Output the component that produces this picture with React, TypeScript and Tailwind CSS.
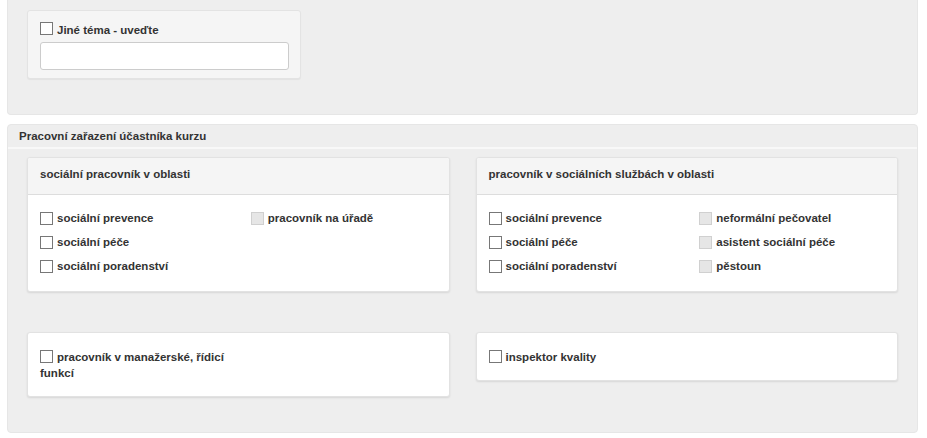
import React from "react";

const font = { fontFamily: '"Liberation Sans", Arial, sans-serif' };

function Box({ disabled }: { disabled?: boolean }) {
  return (
    <span
      className={
        "inline-block w-[13px] h-[13px] shrink-0 border " +
        (disabled ? "bg-[#e6e6e6] border-[#d0d0d0]" : "bg-white border-[#777]")
      }
    />
  );
}

function Item({ label, disabled }: { label: string; disabled?: boolean }) {
  return (
    <div className="flex items-center h-6 gap-[4px]">
      <Box disabled={disabled} />
      <span className="translate-y-[1px]">{label}</span>
    </div>
  );
}

function GroupCard({ title, left, right }: { title: string; left: string[]; right: string[] }) {
  return (
    <div className="bg-white rounded-[3px] border border-[#e2e2e2] shadow-[0_1px_2px_rgba(0,0,0,0.1)] overflow-hidden">
      <div className="h-[37px] bg-[#f5f5f5] border-b border-[#dddddd] flex items-center px-3">
        <span className="-translate-y-[1px]">{title}</span>
      </div>
      <div className="grid grid-cols-2 gap-x-[25px] px-3 pt-[11px] pb-[13px]">
        <div>
          {left.map((l) => (
            <Item key={l} label={l} />
          ))}
        </div>
        <div>
          {right.map((l) => (
            <Item key={l} label={l} disabled />
          ))}
        </div>
      </div>
    </div>
  );
}

function SingleLabel({ text }: { text: string }) {
  return (
    <div className="w-1/2 leading-[16px]">
      <span className="inline-flex h-[13px] leading-none align-[-2px] mr-[4px]">
        <Box />
      </span>
      {text}
    </div>
  );
}

export default function App() {
  return (
    <div className="bg-white w-[927px] h-[438px] px-[7px] pr-[9px] text-[11.5px] font-bold text-[#333]" style={font}>
      <div className="bg-[#eeeeee] h-[115px] rounded-b-[4px] border-x border-b border-[#e6e6e6] pt-[10px] px-[19px]">
        <div className="w-[274px] bg-[#f5f5f5] border border-[#e3e3e3] rounded-[3px] shadow-[0_1px_1px_rgba(0,0,0,0.05)] px-3 pt-[10px] pb-[8px]">
          <div className="flex items-center gap-[4px] h-[14px]">
            <Box />
            <span className="leading-none translate-y-[3px]">Jiné téma - uveďte</span>
          </div>
          <div className="mt-[7px] w-[249px] h-[28px] bg-white border border-[#cccccc] rounded-[3px]" />
        </div>
      </div>

      <div className="mt-[9px] bg-[#eeeeee] h-[309px] rounded-[4px] border border-[#e6e6e6]">
        <div className="h-[24px] flex items-center px-[11px] border-b-2 border-[#f8f8f8]">
          <span className="translate-y-[1px]">Pracovní zařazení účastníka kurzu</span>
        </div>
        <div className="px-[19px] pt-[8px]">
          <div className="grid grid-cols-2 gap-x-[26px]">
            <GroupCard
              title="sociální pracovník v oblasti"
              left={["sociální prevence", "sociální péče", "sociální poradenství"]}
              right={["pracovník na úřadě"]}
            />
            <GroupCard
              title="pracovník v sociálních službách v oblasti"
              left={["sociální prevence", "sociální péče", "sociální poradenství"]}
              right={["neformální pečovatel", "asistent sociální péče", "pěstoun"]}
            />
          </div>
          <div className="grid grid-cols-2 gap-x-[26px] items-start mt-[40px]">
            <div className="bg-white rounded-[3px] border border-[#e2e2e2] shadow-[0_1px_2px_rgba(0,0,0,0.1)] px-3 pt-[16px] pb-[15px]">
              <SingleLabel text="pracovník v manažerské, řídicí funkcí" />
            </div>
            <div className="bg-white rounded-[3px] border border-[#e2e2e2] shadow-[0_1px_2px_rgba(0,0,0,0.1)] px-3 pt-[16px] pb-[15px]">
              <SingleLabel text="inspektor kvality" />
            </div>
          </div>
        </div>
      </div>
    </div>
  );
}
